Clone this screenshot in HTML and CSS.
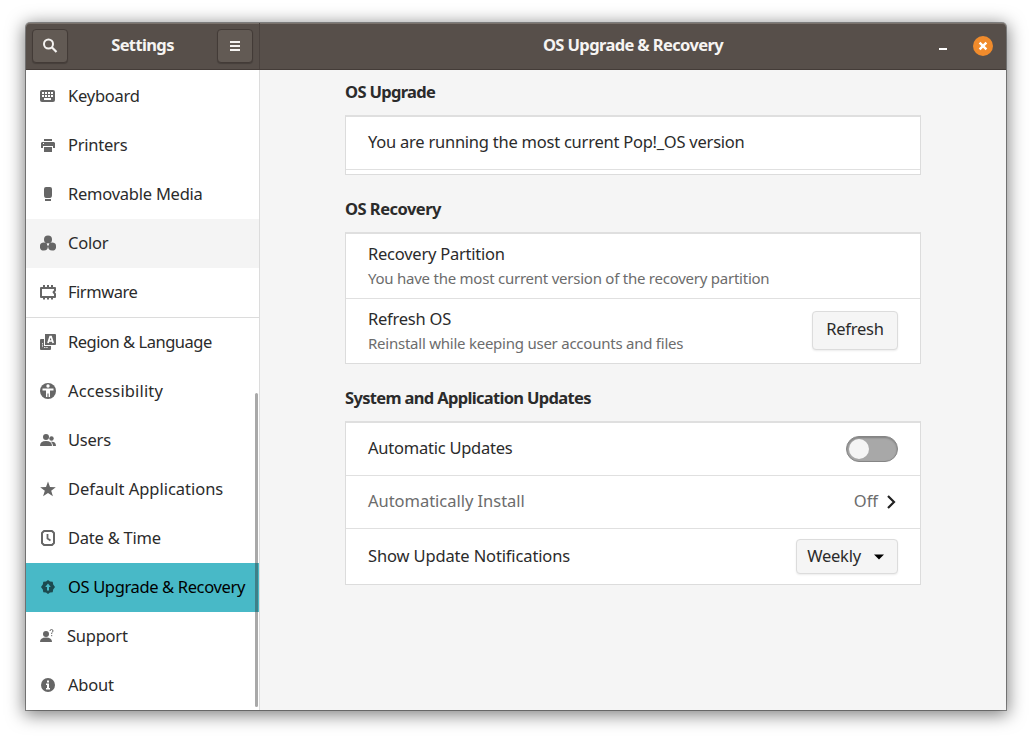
FILE: index.html
```
<!DOCTYPE html>
<html lang="en"><head><meta charset="utf-8"><title>Settings</title><link rel="stylesheet" href="styles.css"></head>
<body>
<div class="window">
<header class="titlebar">
 <div class="side-head">
  <button class="hbtn" aria-label="Search"><svg width="16" height="16" viewBox="0 0 16 16"><circle cx="6.500" cy="6" r="4.500" fill="none" stroke="#f5f3f1" stroke-width="2"/><path d="M9.800 9.300l4.700 4.700" stroke="#f5f3f1" stroke-width="2.200"/></svg></button>
  <span class="title">Settings</span>
  <button class="hbtn" aria-label="Menu"><svg width="16" height="16" viewBox="0 0 16 16"><path d="M3 4h10M3 8h10M3 12h10" stroke="#f5f3f1" stroke-width="2"/></svg></button>
 </div>
 <div class="main-head"><span class="title">OS Upgrade &amp; Recovery</span>
  <div class="controls"><svg width="16" height="16" viewBox="0 0 16 16"><path d="M4 11h8" stroke="#fff" stroke-width="2"/></svg>
  <svg width="20" height="20" viewBox="0 0 20 20"><circle cx="10" cy="10" r="10" fill="#f08b2c"/><path d="M6.600 6.600l6.800 6.800M13.400 6.600l-6.800 6.800" stroke="#fff" stroke-width="2.400"/></svg></div>
 </div>
</header>
<div class="body">
<nav class="sidebar">
 <a class="item"><svg viewBox="0 0 16 16"><rect x="0" y="2" width="15" height="12" rx="2"/><path d="M2 5h11M2 8h11" stroke="#fff" stroke-width="2" stroke-dasharray="2 1"/><path d="M4 11h7" stroke="#fff" stroke-width="2"/></svg><span>Keyboard</span></a>
 <a class="item"><svg viewBox="0 0 16 16"><path d="M4 2h8v2H4zM2 5h12l1 1v5h-2V9H3v2H1V6zM4 10h8v5H4z"/><path d="M3 6.500h1" stroke="#fff"/></svg><span>Printers</span></a>
 <a class="item"><svg viewBox="0 0 16 16"><path d="M4 3q0-2 2-2h4q2 0 2 2v6q0 3-2 3H6q-2 0-2-3zM5 13h6v2H5z"/></svg><span>Removable Media</span></a>
 <a class="item hover"><svg viewBox="0 0 16 16"><circle cx="8" cy="4.500" r="4"/><circle cx="3.900" cy="11.500" r="4"/><circle cx="12.100" cy="11.500" r="4"/><circle cx="8" cy="9.400" r="1" fill="#f4f4f4"/></svg><span>Color</span></a>
 <a class="item tight"><svg viewBox="0 0 16 16"><path d="M1 4h14v2.500l-1.500 1.700L15 10v3H1z" fill="none" stroke="#666" stroke-width="2" stroke-linejoin="round"/><path d="M4 1v3M8 1v3M12 1v3M4 13v2.500M8 13v2.500M12 13v2.500" stroke="#666" stroke-width="2"/></svg><span>Firmware</span></a>
 <div class="rule"></div>
 <a class="item tight"><svg viewBox="0 0 16 16"><path d="M5 0h10q1 0 1 1v9q0 1-1 1H5zM0 6q0-1 1-1h3v7h7v3q0 1-1 1H1q-1 0-1-1z"/><path d="M2.500 9v4.500M4 13.500h4" stroke="#ddd" stroke-dasharray="1.500 .7"/><path d="M8 9l2.100-6.500h1L13.200 9M9 7h3.200" fill="none" stroke="#fff" stroke-width="1.700"/></svg><span>Region &amp; Language</span></a>
 <a class="item loose"><svg viewBox="0 0 16 16"><circle cx="8" cy="8" r="8"/><circle cx="8" cy="3" r="1.700" fill="#fff"/><path d="M2.500 5.500h11v2H10V14H8.600v-3.500H7.400V14H6V7.500H2.500z" fill="#fff"/></svg><span>Accessibility</span></a>
 <a class="item"><svg viewBox="0 0 16 16"><circle cx="6" cy="5" r="3"/><circle cx="11.500" cy="6.500" r="2.200"/><path d="M0 14q0-5 6-5t6 5zM11 9.800q5-.5 5 4.200h-3q0-2.500-2-4.200z"/></svg><span>Users</span></a>
 <a class="item even"><svg viewBox="0 0 16 16"><path d="M8 .5l2 5.600 5.800.1-4.600 3.500 1.700 5.600L8 12l-4.900 3.300 1.700-5.600L.2 6.200 6 6.100z"/></svg><span>Default Applications</span></a>
 <a class="item"><svg viewBox="0 0 16 16"><path d="M4 1h8l2 2v10l-2 2H4l-2-2V3z" fill="none" stroke="#666" stroke-width="2" stroke-linejoin="round"/><path d="M7.500 4v4.500l3 2" fill="none" stroke="#666" stroke-width="1.800"/></svg><span>Date &amp; Time</span></a>
 <a class="item active"><svg viewBox="0 0 16 16"><path d="M8 1l2 1.500 2.700.3.500 2.600L15 8l-1.800 2.600-.5 2.600-2.700.3L8 15l-2-1.500-2.700-.3-.5-2.600L1 8l1.800-2.600.5-2.600L6 2.500z"/><path d="M8 4.500L10.800 8H9v3.500H7V8H5.200z" fill="#48b9c7"/></svg><span>OS Upgrade &amp; Recovery</span></a>
 <a class="item support"><svg viewBox="0 0 16 16"><circle cx="6" cy="6" r="3"/><path d="M0 14q0-4.500 6-4.500T12 14z"/><path d="M10 3q0-1.500 1.500-1.500T13 3q0 .8-1.300 1.800V6M11.700 7v1.200" fill="none" stroke="#666"/></svg><span>Support</span></a>
 <a class="item"><svg viewBox="0 0 16 16"><circle cx="8" cy="8" r="7"/><path d="M7 3.500h2v2H7zM6 6.500h3v4.500h1v1.500H6V11h1V8H6z" fill="#fff"/></svg><span>About</span></a>
 <div class="scrollbar"></div>
</nav>
<main class="content">
 <h2>OS Upgrade</h2>
 <section class="card c1"><div class="row"><span class="label">You are running the most current Pop!_OS version</span></div><div class="row stub"></div></section>
 <h2 class="recovery">OS Recovery</h2>
 <section class="card c2">
  <div class="row"><div class="stack"><span>Recovery Partition</span><small>You have the most current version of the recovery partition</small></div></div>
  <div class="row"><div class="stack"><span>Refresh OS</span><small>Reinstall while keeping user accounts and files</small></div><button class="btn refresh"><span class="label">Refresh</span></button></div>
 </section>
 <h2>System and Application Updates</h2>
 <section class="card c3">
  <div class="row"><span class="label">Automatic Updates</span><span class="switch"></span></div>
  <div class="row dim"><span class="label even">Automatically Install</span><span class="value"><span class="label even">Off</span><svg width="16" height="16" viewBox="0 0 16 16"><path d="M6 2l6 6-6 6" fill="none" stroke="#222" stroke-width="2.200"/></svg></span></div>
  <div class="row"><span class="label notify">Show Update Notifications</span><button class="btn weekly"><span class="label">Weekly</span><svg width="16" height="16" viewBox="0 0 16 16"><path d="M3 5.500h10L8 10.500z"/></svg></button></div>
 </section>
</main>
</div></div>
</body></html>
```
FILE: styles.css
```
*{box-sizing:border-box}
body{margin:0;padding:23px 26px 29px;background:#fff;font-family:"Noto Sans","Open Sans",sans-serif;font-size:16.5px;letter-spacing:-.24px;line-height:22px;color:#2b2b2b;height:739px;overflow:hidden}
.window{height:687px;border-radius:4px 4px 0 0;box-shadow:0 0 0 1px rgba(0,0,0,.38),0 3px 17px 2px rgba(0,0,0,.5);display:flex;flex-direction:column}
.titlebar{height:47px;display:flex;background:#574f4a;border-bottom:1px solid #443c38;border-radius:4px 4px 0 0;box-shadow:inset 0 1px #7a726c;color:#f6f4f2;font-weight:700}
.side-head{width:234px;border-right:1px solid #4a423e;padding:0 6px;display:flex;align-items:center;justify-content:space-between}
.title{white-space:nowrap;letter-spacing:-.62px;padding-bottom:2px}
.hbtn{width:36px;height:34px;padding:0;border:1px solid #433b37;border-radius:4px;background:#625a54;display:flex;align-items:center;justify-content:center;box-shadow:0 1px 1px rgba(0,0,0,.2)}
.main-head{flex:1;display:grid;grid-template-columns:1fr auto 1fr;align-items:center}
.main-head .title{grid-column:2}
.controls{display:flex;justify-content:flex-end;align-items:center;gap:22px;padding-right:13px}
.body{flex:1;display:flex;min-height:0}
.sidebar{width:234px;background:#fff;border-right:1px solid #dcdcdc;padding-top:2px;position:relative}
.item{height:49px;display:flex;align-items:center;gap:12px;padding:0 0 2px 14px;white-space:nowrap}
.item svg{width:16px;height:16px;fill:#666;flex:none}
.tight{letter-spacing:-.48px}
.loose{letter-spacing:.15px}
.even{letter-spacing:-.03px}
.support{gap:11px}
.hover{background:#f4f4f4}
.active{background:#48b9c7;color:#000;letter-spacing:-.36px}
.active svg{fill:#1c4a50}
.rule{height:1px;background:#dcdcdc}
.scrollbar{position:absolute;right:1px;top:323px;width:3px;height:314px;background:rgba(50,50,50,.42);border-radius:2px}
.content{flex:1;background:#f5f5f5;padding:11px 85px 0}
h2{margin:0 0 12px;font-size:16.5px;line-height:22px;letter-spacing:-.67px}
.recovery{letter-spacing:-.52px}
.card{border:1px solid #dcdcdc;border-top:2px solid #dfdfdf;background:#fff;margin-bottom:23px}
.row{padding:0 22px;display:flex;align-items:center;justify-content:space-between;border-bottom:1px solid #e0e0e0}
.row:last-child{border-bottom:0}
.label{padding-bottom:2px}
.c1 .row{height:53px}.c1 .stub{height:4px}
.c2 .row{height:65px}.c2 .row:last-child{height:64px}
.c3 .row{height:53px}.c3 .row:last-child{height:55px}
.stack{display:flex;flex-direction:column;gap:2px}
small{font-size:15px;color:#6c6c6c}
.dim{color:#6c6c6c}
.notify{letter-spacing:-.14px}
.btn{font:inherit;letter-spacing:inherit;color:#2b2b2b;background:#f5f5f5;border:1px solid #dcdcdc;border-radius:4px;box-shadow:0 1px 2px rgba(0,0,0,.08);display:flex;align-items:center;justify-content:center;padding:0;white-space:nowrap}
.refresh{width:86px;height:39px;margin-bottom:2px}
.weekly{width:102px;height:35px;gap:10px}
.switch{width:52px;height:26px;border-radius:13px;background:#a8a8a8;border:1px solid #858585;box-shadow:inset 0 1px 2px rgba(0,0,0,.25);padding:2px}
.switch::before{content:"";display:block;width:20px;height:20px;border-radius:50%;background:#f5f5f5}
.value{display:flex;align-items:center;gap:4px}
```
